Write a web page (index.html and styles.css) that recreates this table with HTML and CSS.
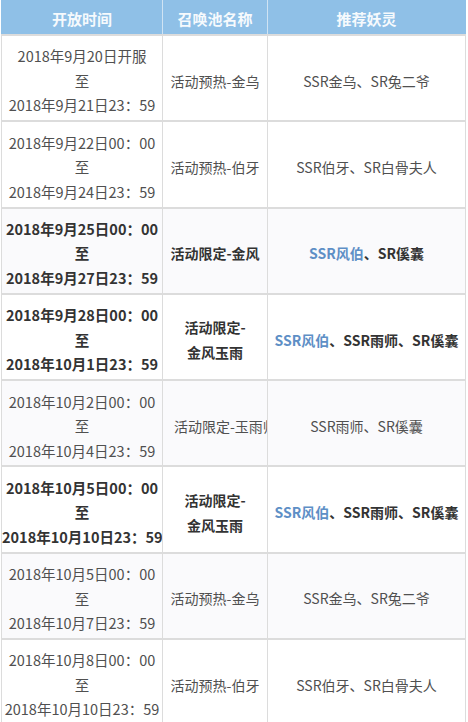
FILE: index.html
```html
<!DOCTYPE html>
<html lang="zh-CN">
<head>
<meta charset="utf-8">
<title>召唤池时间表</title>
<link rel="stylesheet" href="styles.css">
</head>
<body>
<div class="wrap">
<table class="pool">
  <colgroup>
    <col class="c-time">
    <col class="c-name">
    <col class="c-spirit">
  </colgroup>
  <thead>
    <tr><th>开放时间</th><th>召唤池名称</th><th>推荐妖灵</th></tr>
  </thead>
  <tbody>
    <tr>
      <td class="time">2018年9月20日开服<br>至<br>2018年9月21日23：59</td>
      <td class="name">活动预热-金乌</td>
      <td class="spirit">SSR金乌、SR兔二爷</td>
    </tr>
    <tr>
      <td class="time">2018年9月22日00：00<br>至<br>2018年9月24日23：59</td>
      <td class="name">活动预热-伯牙</td>
      <td class="spirit">SSR伯牙、SR白骨夫人</td>
    </tr>
    <tr class="hot shade">
      <td class="time">2018年9月25日00：00<br>至<br>2018年9月27日23：59</td>
      <td class="name">活动限定-金风</td>
      <td class="spirit"><span class="blue">SSR风伯</span>、SR傒囊</td>
    </tr>
    <tr class="hot">
      <td class="time">2018年9月28日00：00<br>至<br>2018年10月1日23：59</td>
      <td class="name">活动限定-<br>金风玉雨</td>
      <td class="spirit"><span class="blue">SSR风伯</span>、SSR雨师、SR傒囊</td>
    </tr>
    <tr class="shade">
      <td class="time">2018年10月2日00：00<br>至<br>2018年10月4日23：59</td>
      <td class="name clip">活动限定-玉雨师</td>
      <td class="spirit">SSR雨师、SR傒囊</td>
    </tr>
    <tr class="hot">
      <td class="time">2018年10月5日00：00<br>至<br>2018年10月10日23：59</td>
      <td class="name">活动限定-<br>金风玉雨</td>
      <td class="spirit"><span class="blue">SSR风伯</span>、SSR雨师、SR傒囊</td>
    </tr>
    <tr class="shade">
      <td class="time">2018年10月5日00：00<br>至<br>2018年10月7日23：59</td>
      <td class="name">活动预热-金乌</td>
      <td class="spirit">SSR金乌、SR兔二爷</td>
    </tr>
    <tr>
      <td class="time">2018年10月8日00：00<br>至<br>2018年10月10日23：59</td>
      <td class="name">活动预热-伯牙</td>
      <td class="spirit">SSR伯牙、SR白骨夫人</td>
    </tr>
  </tbody>
</table>
</div>
</body>
</html>
```

FILE: styles.css
```css
html, body {
  margin: 0;
  padding: 0;
  background: #ffffff;
}

.wrap {
  padding-left: 1px;
}

.pool {
  border-collapse: collapse;
  table-layout: fixed;
  width: 464px;
  font-family: "Noto Sans CJK SC", sans-serif;
  color: #505050;
  text-autospace: no-autospace;
}

.c-time { width: 161px; }
.c-name { width: 105px; }
.c-spirit { width: 198px; }

.pool th {
  height: 30px;
  padding: 4px 0 0;
  background: #8fc0e7;
  color: #f6fafd;
  font-size: 15px;
  line-height: 20px;
  font-weight: 700;
  text-align: center;
  vertical-align: middle;
  border: 0 solid #8fc0e7;
  border-left: 1px solid #cfe3f3;
  border-right: 1px solid #cfe3f3;
}

.pool th:first-child { border-left-color: #8fc0e7; }
.pool th:last-child { border-right-color: #8fc0e7; }

.pool td {
  height: 78.3px;
  padding: 6px 0 0;
  border: 1px solid #dcdcdc;
  border-top-width: 2px;
  text-align: center;
  vertical-align: middle;
  white-space: nowrap;
  overflow: hidden;
}

.pool td.time {
  font-size: 14.5px;
  line-height: 24.5px;
}

.pool td.name,
.pool td.spirit {
  font-size: 14px;
  line-height: 25px;
}

.pool td.clip {
  text-align: left;
  padding-left: 11px;
  text-overflow: clip;
}

.pool tr.shade td {
  background: #fafafc;
}

.pool tr.hot td {
  color: #333333;
  font-weight: 700;
}

.pool .blue {
  color: #5e8fc6;
}
```
